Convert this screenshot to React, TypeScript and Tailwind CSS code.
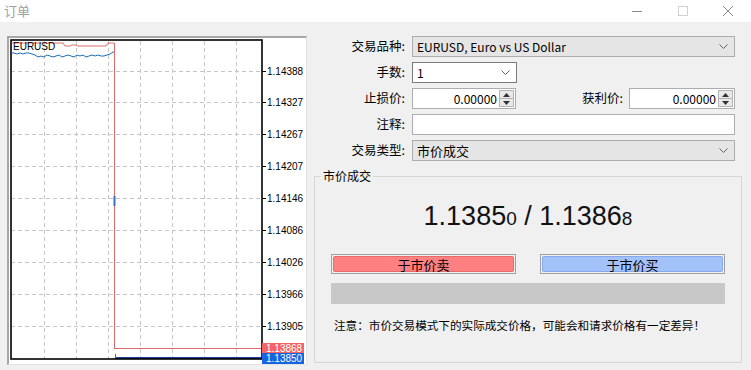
import React from 'react';

const latin = { fontFamily: '"Liberation Sans", Arial, sans-serif' };
const cjk = { fontFamily: '"Noto Sans CJK SC", "Noto Sans", sans-serif' };

const gridX = [44, 76, 108, 140, 172, 204, 236];
const levels = [
  { y: 71, p: '1.14388' },
  { y: 102, p: '1.14327' },
  { y: 134, p: '1.14267' },
  { y: 166, p: '1.14207' },
  { y: 198, p: '1.14146' },
  { y: 230, p: '1.14086' },
  { y: 262, p: '1.14026' },
  { y: 294, p: '1.13966' },
  { y: 326, p: '1.13905' },
];

// ask line: flat, a small dip, then back up before the jump
const askPts: [number, number][] = [
  [12, 43], [63, 43], [65, 46], [70, 46], [72, 45], [76, 45], [78, 46], [106, 46], [108, 43], [114, 43],
];

// bid line: small wobbles
const bidPts: [number, number][] = (() => {
  const pts: [number, number][] = [[12, 53]];
  const wob = [53, 54, 53, 54, 53, 53, 54, 55, 57, 56, 57, 55, 56, 57, 56, 55, 57, 56, 55, 56, 57, 55, 56, 55, 57, 56, 55, 56, 55, 56, 56, 55, 54, 52];
  wob.forEach((y, i) => pts.push([14 + i * 3, y]));
  pts.push([114, 52]);
  return pts;
})();

const toPath = (pts: [number, number][]) => pts.map(([x, y], i) => `${i ? 'L' : 'M'}${x} ${y}`).join(' ');

const Chart = () => (
  <div className="ml-[7px] h-[329px] w-[300px] border-l-2 border-t-2 border-[#a7a7a7] border-r border-b border-r-[#e2e2e2] border-b-[#e2e2e2] bg-white">
    <svg width="297" height="326" className="block">
      <g transform="translate(-9,-38)">
        {gridX.map((x) => (
          <line key={x} x1={x + 0.5} y1={41} x2={x + 0.5} y2={359} stroke="#c6c6c6" strokeDasharray="4 3" />
        ))}
        {levels.map((l) => (
          <g key={l.p}>
            <line x1={11} y1={l.y + 0.5} x2={262} y2={l.y + 0.5} stroke="#c6c6c6" strokeDasharray="4 3" />
            <line x1={262} y1={l.y + 0.5} x2={266} y2={l.y + 0.5} stroke="#000" />
            <text x={267} y={l.y + 4} fontSize="10" fill="#000" style={latin}>{l.p}</text>
          </g>
        ))}
        <path d={toPath(askPts)} fill="none" stroke="#e06a6a" strokeWidth="1" />
        <path d={toPath(bidPts)} fill="none" stroke="#1f6fb4" strokeWidth="1" />
        <line x1={114.5} y1={43} x2={114.5} y2={348} stroke="#e06a6a" />
        <line x1={114} y1={348.5} x2={262} y2={348.5} stroke="#e06a6a" />
        <line x1={114.5} y1={196} x2={114.5} y2={206} stroke="#3a6fc8" strokeWidth="2" />
        <line x1={115} y1={358} x2={262} y2={358} stroke="#1c3f94" strokeWidth="2" />
        <line x1={115.5} y1={354} x2={115.5} y2={358} stroke="#3a6fc8" />
        <rect x={11} y={40} width={251} height={319} fill="none" stroke="#000" strokeWidth="1.6" />
        <text x={13} y={50} fontSize="10" fill="#000" style={latin}>EURUSD</text>
        <rect x={262} y={343} width={42} height={10} fill="#f26565" />
        <text x={266} y={352} fontSize="10" fill="#fff" style={latin}>1.13868</text>
        <rect x={262} y={353} width={42} height={11} fill="#1565e0" />
        <text x={266} y={362} fontSize="10" fill="#fff" style={latin}>1.13850</text>
      </g>
    </svg>
  </div>
);

const Chevron = () => (
  <svg width="9" height="6" viewBox="0 0 9 6" className="shrink-0">
    <polyline points="0.5,0.5 4.5,4.5 8.5,0.5" fill="none" stroke="#606060" strokeWidth="1" />
  </svg>
);

const Spin = () => (
  <div className="ml-auto mr-[1px] flex h-[17px] w-[15px] flex-col border border-[#b5b5b5] bg-[#e8e8e8]">
    <div className="flex flex-1 items-center justify-center border-b border-[#b5b5b5]">
      <svg width="7" height="4" viewBox="0 0 7 4"><polygon points="0,4 3.5,0 7,4" fill="#333" /></svg>
    </div>
    <div className="flex flex-1 items-center justify-center">
      <svg width="7" height="4" viewBox="0 0 7 4"><polygon points="0,0 3.5,4 7,0" fill="#333" /></svg>
    </div>
  </div>
);

const Label = ({ children }: { children: React.ReactNode }) => (
  <div className="w-[92px] shrink-0 pr-[1px] text-right text-[12.5px]">{children}</div>
);

const App = () => {
  return (
    <div className="h-[370px] w-[751px] overflow-hidden bg-[#f0f0f0] text-[12px] text-black" style={cjk}>
      <div className="flex h-[22px] items-center bg-white">
        <span className="ml-[4px] text-[13px] text-[#a0a0a0]">订单</span>
        <div className="ml-auto flex items-center">
          <svg width="12" height="12" viewBox="0 0 12 12" className="mr-[34px]"><line x1="1" y1="6.5" x2="11" y2="6.5" stroke="#8a8a8a" /></svg>
          <svg width="12" height="12" viewBox="0 0 12 12" className="mr-[33px]"><rect x="1.5" y="1.5" width="9" height="9" fill="none" stroke="#d0d0d0" /></svg>
          <svg width="12" height="12" viewBox="0 0 12 12" className="mr-[17px]"><path d="M1 1 L11 11 M11 1 L1 11" stroke="#8a8a8a" strokeWidth="1" /></svg>
        </div>
      </div>

      <div className="flex pt-[14px]">
        <Chart />

        <div className="ml-[7px] flex w-[428px] flex-col">
          <div className="flex flex-col gap-[5px] pr-[7px]">
            <div className="flex h-[21px] items-center">
              <Label>交易品种:</Label>
              <div className="ml-[6px] flex h-full flex-1 items-center border border-[#adadad] bg-[#e5e5e5] pl-[4px] pr-[6px]">
                <span className="flex-1">EURUSD, Euro vs US Dollar</span>
                <Chevron />
              </div>
            </div>
            <div className="flex h-[21px] items-center">
              <Label>手数:</Label>
              <div className="ml-[6px] flex h-full w-[105px] items-center border border-[#7a7a7a] bg-white pl-[4px] pr-[6px]">
                <span className="flex-1">1</span>
                <Chevron />
              </div>
            </div>
            <div className="flex h-[21px] items-center">
              <Label>止损价:</Label>
              <div className="ml-[6px] flex h-full w-[104px] items-center border border-[#abadb3] bg-white">
                <span className="flex-1 pr-[2px] text-right">0.00000</span>
                <Spin />
              </div>
              <div className="flex-1 text-right text-[12.5px]">获利价:</div>
              <div className="ml-[6px] flex h-full w-[106px] items-center border border-[#abadb3] bg-white">
                <span className="flex-1 pr-[2px] text-right">0.00000</span>
                <Spin />
              </div>
            </div>
            <div className="flex h-[21px] items-center">
              <Label>注释:</Label>
              <div className="ml-[6px] h-full flex-1 border border-[#abadb3] bg-white" />
            </div>
            <div className="flex h-[21px] items-center">
              <Label>交易类型:</Label>
              <div className="ml-[6px] flex h-full flex-1 items-center border border-[#adadad] bg-[#e5e5e5] pl-[4px] pr-[6px]">
                <span className="flex-1 text-[13px]">市价成交</span>
                <Chevron />
              </div>
            </div>
          </div>

          <div className="relative mt-[15px] flex h-[187px] flex-col border border-[#d5d5d5] px-[16px]">
            <span className="absolute left-[6px] top-[-9px] bg-[#f0f0f0] px-[2px] text-[12px] leading-[16px]">市价成交</span>
            <div className="mt-[24px] text-center text-[27px] leading-[31px] text-[#111]" style={latin}>
              1.1385<span className="text-[19px]">0</span> / 1.1386<span className="text-[19px]">8</span>
            </div>
            <div className="mt-[20px] flex justify-between">
              <button className="h-[20px] w-[185px] border border-[#a0a0a0] p-[1px]">
                <div className="flex h-full items-center justify-center rounded-[2px] border border-[#e86a6a] bg-[#ff8080] text-[13px] leading-none">于市价卖</div>
              </button>
              <button className="h-[20px] w-[185px] border border-[#a0a0a0] p-[1px]">
                <div className="flex h-full items-center justify-center rounded-[2px] border border-[#86a8ec] bg-[#a4c2fa] text-[13px] leading-none">于市价买</div>
              </button>
            </div>
            <div className="mt-[9px] h-[21px] bg-[#c8c8c8]" />
            <div className="mt-[13px] pl-[3px] text-[11.6px] leading-[16px]">注意：市价交易模式下的实际成交价格，可能会和请求价格有一定差异！</div>
          </div>
        </div>
      </div>
    </div>
  );
};

export default App;
